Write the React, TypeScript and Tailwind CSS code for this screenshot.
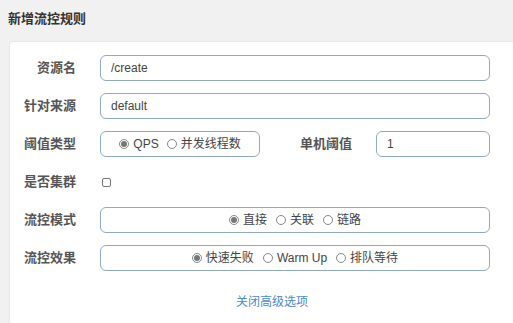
import React from "react";

const font = { fontFamily: '"Liberation Sans", "Noto Sans CJK SC", sans-serif' };

const Radio = ({ checked, label }: { checked?: boolean; label: string }) => (
  <span className="flex items-center gap-[4px]">
    <span className="w-[10px] h-[10px] rounded-full border border-[#888] flex items-center justify-center">
      {checked && <span className="w-[6px] h-[6px] rounded-full bg-[#777]" />}
    </span>
    <span>{label}</span>
  </span>
);

const Label = ({ children }: { children: React.ReactNode }) => (
  <div className="w-[66px] shrink-0 text-right text-[13px] font-bold text-[#555]">{children}</div>
);

const boxCls =
  "h-[26px] rounded-[6px] border border-[#90abc0] bg-white flex items-center text-[12px] text-[#444]";

export default function App() {
  return (
    <div className="w-[513px] h-[323px] overflow-hidden bg-[#f1f1f1]" style={font}>
      {/* title */}
      <div className="pl-[8px] pt-[11px] h-[41px] text-[13px] font-bold text-[#333] leading-[16px]">
        新增流控规则
      </div>

      {/* form card */}
      <div className="ml-[9px] w-[530px] h-[300px] bg-white rounded-[4px] border border-[#e8e8e8] pt-[13px] flex flex-col">
        <div className="flex flex-col gap-[12px]">
          <div className="flex items-center">
            <Label>资源名</Label>
            <div className={`${boxCls} ml-[24px] w-[390px] px-[10px]`}>/create</div>
          </div>
          <div className="flex items-center">
            <Label>针对来源</Label>
            <div className={`${boxCls} ml-[24px] w-[390px] px-[10px]`}>default</div>
          </div>
          <div className="flex items-center">
            <Label>阈值类型</Label>
            <div className={`${boxCls} ml-[24px] w-[160px] justify-center gap-[8px]`}>
              <Radio checked label="QPS" />
              <Radio label="并发线程数" />
            </div>
            <div className="ml-[40px] w-[52px] text-[13px] font-bold text-[#555]">单机阈值</div>
            <div className={`${boxCls} ml-[24px] w-[114px] px-[10px]`}>1</div>
          </div>
          <div className="flex items-center h-[26px]">
            <Label>是否集群</Label>
            <div className="ml-[26px] w-[9px] h-[9px] border border-[#777] rounded-[2px]" />
          </div>
          <div className="flex items-center">
            <Label>流控模式</Label>
            <div className={`${boxCls} ml-[24px] w-[390px] justify-center gap-[9px]`}>
              <Radio checked label="直接" />
              <Radio label="关联" />
              <Radio label="链路" />
            </div>
          </div>
          <div className="flex items-center">
            <Label>流控效果</Label>
            <div className={`${boxCls} ml-[24px] w-[390px] justify-center gap-[9px]`}>
              <Radio checked label="快速失败" />
              <Radio label="Warm Up" />
              <Radio label="排队等待" />
            </div>
          </div>
        </div>
        <div className="mt-[24px] text-center text-[12px] leading-[14px] text-[#4a8ad0] pr-[4px]">
          关闭高级选项
        </div>
      </div>
    </div>
  );
}
